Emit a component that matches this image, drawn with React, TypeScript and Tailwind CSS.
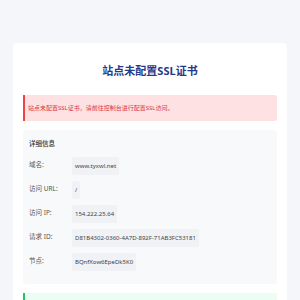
const rows: { label: string; value: string }[] = [
  { label: "域名:", value: "www.tyxwl.net" },
  { label: "访问 URL:", value: "/" },
  { label: "访问 IP:", value: "154.222.25.64" },
  { label: "请求 ID:", value: "D81B4302-0360-4A7D-892F-71AB3FC53181" },
  { label: "节点:", value: "BQnfXow6EpeDk5K0" },
];

export default function App() {
  return (
    <div
      className="min-h-screen bg-[#f5f6fa] px-[13px] pt-[43px] pb-8"
      style={{ fontFamily: '"Noto Sans", "Noto Sans CJK SC", sans-serif' }}
    >
      <div className="bg-white rounded-[4px] px-[10px] pt-[20px] pb-[16px]">
        <h1 className="text-center text-[11px] leading-[16px] font-bold text-[#26398a]">
          站点未配置SSL证书
        </h1>

        <div className="mt-[16px] h-[26px] flex items-center border-l-2 border-[#ef4444] bg-[#fee2e3] rounded-r-[2px] pl-[3px]">
          <p className="text-[6px] leading-[8px] text-[#d9363e]">
            站点未配置SSL证书，请前往控制台进行配置SSL访问。
          </p>
        </div>

        <div className="mt-[9px] bg-[#f8f9fb] rounded-[3px] px-[6px] pt-[10px] pb-[13px]">
          <h2 className="text-[6.5px] leading-[8px] font-medium text-[#333]">详细信息</h2>
          <div className="mt-[9px] flex flex-col gap-[6px]">
            {rows.map((r) => (
              <div key={r.label} className="flex items-center h-[18px]">
                <span className="w-[43px] shrink-0 text-[6.5px] leading-[8px] text-[#555] -mt-[2px]">
                  {r.label}
                </span>
                <span className="h-[18px] flex items-center bg-[#f0f2f6] rounded-[2px] px-[3px] text-[6px] leading-[8px] text-[#444]">
                  {r.value}
                </span>
              </div>
            ))}
          </div>
        </div>

        {/* success notice, continues below the fold */}
        <div className="mt-[9px] h-[40px] border-l-2 border-[#22c55e] bg-[#ecfdf3] rounded-r-[2px]" />
      </div>
    </div>
  );
}
